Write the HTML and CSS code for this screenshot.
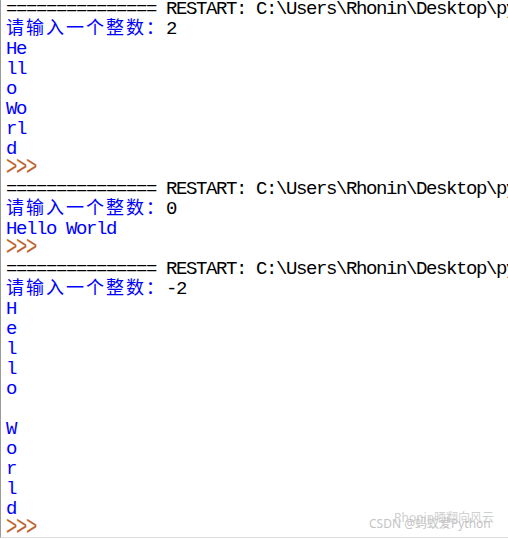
FILE: index.html
```html
<!DOCTYPE html>
<html lang="zh">
<head>
<meta charset="utf-8">
<title>IDLE Shell</title>
<link rel="stylesheet" href="styles.css">
</head>
<body>
<div class="shell">
  <div class="lines">
    <div class="line sys">=============== RESTART: C:\Users\Rhonin\Desktop\python\test.py ===============</div>
    <div class="line"><span class="out cjk">请输入一个整数：</span><span class="in">2</span></div>
    <div class="line out">He</div>
    <div class="line out">ll</div>
    <div class="line out">o</div>
    <div class="line out">Wo</div>
    <div class="line out">rl</div>
    <div class="line out">d</div>
    <div class="line"><span class="prompt">&gt;&gt;&gt;</span></div>
    <div class="line sys">=============== RESTART: C:\Users\Rhonin\Desktop\python\test.py ===============</div>
    <div class="line"><span class="out cjk">请输入一个整数：</span><span class="in">0</span></div>
    <div class="line out">Hello World</div>
    <div class="line"><span class="prompt">&gt;&gt;&gt;</span></div>
    <div class="line sys">=============== RESTART: C:\Users\Rhonin\Desktop\python\test.py ===============</div>
    <div class="line"><span class="out cjk">请输入一个整数：</span><span class="in">-2</span></div>
    <div class="line out">H</div>
    <div class="line out">e</div>
    <div class="line out">l</div>
    <div class="line out">l</div>
    <div class="line out">o</div>
    <div class="line out"> </div>
    <div class="line out">W</div>
    <div class="line out">o</div>
    <div class="line out">r</div>
    <div class="line out">l</div>
    <div class="line out">d</div>
    <div class="line"><span class="prompt">&gt;&gt;&gt;</span></div>
  </div>
  <div class="watermark">
    <span class="wm-back">Rhonin晒翻向风云</span>
    <span class="wm-front">CSDN @蚂蚁爱Python</span>
  </div>
</div>
</body>
</html>
```

FILE: styles.css
```css
html, body {
  margin: 0;
  padding: 0;
  background: #ffffff;
}

.shell {
  position: relative;
  box-sizing: border-box;
  width: 508px;
  height: 538px;
  overflow: hidden;
  border-left: 1px solid #9a9a9a;
  border-bottom: 1px solid #dcdcdc;
  background: #ffffff;
}

.lines {
  margin-top: -1px;
  padding-left: 5px;
  font-family: "Liberation Mono", "DejaVu Sans Mono", monospace;
  font-size: 19px;
  letter-spacing: -1.4px;
  line-height: 20px;
}

.line {
  height: 20px;
  white-space: pre;
}

.sys { color: #000000; }
.in { color: #000000; }
.out { color: #0000ff; }

.prompt {
  display: inline-block;
  color: #c0652e;
  transform: scaleY(1.45);
  transform-origin: 50% 60%;
}

.cjk {
  font-family: "Noto Sans CJK SC", sans-serif;
  font-size: 18px;
  line-height: 14px;
  letter-spacing: 2px;
}

.watermark {
  position: absolute;
  left: 368px;
  top: 508px;
  width: 130px;
  height: 24px;
  font-family: "Noto Sans", "Noto Sans CJK SC", sans-serif;
  font-size: 12px;
  color: #c4c4c4;
}

.wm-back {
  position: absolute;
  left: 25px;
  top: 0;
  white-space: nowrap;
  color: #cfcfcf;
}

.wm-front {
  position: absolute;
  left: 0;
  top: 6px;
  white-space: nowrap;
}
```
